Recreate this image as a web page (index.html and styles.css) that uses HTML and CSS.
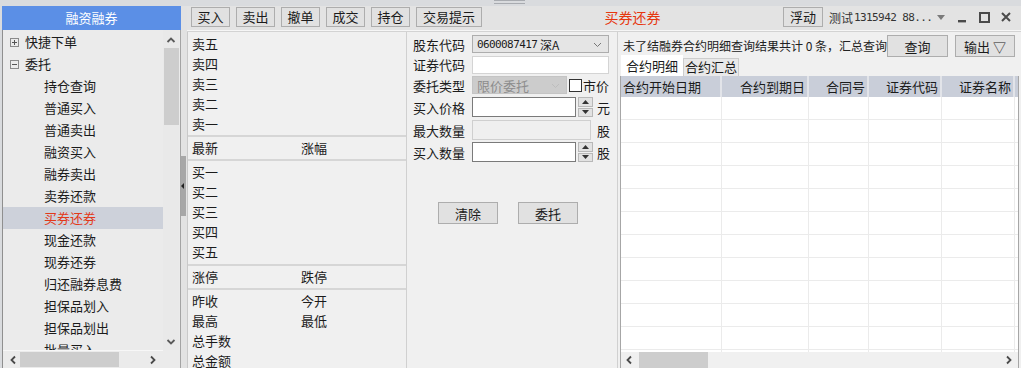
FILE: index.html
```html
<!DOCTYPE html>
<html lang="zh-CN">
<head>
<meta charset="utf-8">
<title>融资融券</title>
<link rel="stylesheet" href="styles.css">
</head>
<body>
<div class="app">
  <div class="topstrip"><span class="grip"></span></div>
  <div class="frame">
    <aside class="side">
      <div class="side-head">融资融券</div>
      <div class="tree">
        <ul class="tree-list">
          <li class="node"><svg class="box" width="9" height="9" viewBox="0 0 9 9"><rect x="0.5" y="0.5" width="8" height="8" fill="none" stroke="#8a8a8a"/><path d="M2 4.5h5M4.5 2v5" stroke="#555"/></svg>快捷下单</li>
          <li class="node"><svg class="box" width="9" height="9" viewBox="0 0 9 9"><rect x="0.5" y="0.5" width="8" height="8" fill="none" stroke="#8a8a8a"/><path d="M2 4.5h5" stroke="#555"/></svg>委托</li>
          <li class="leaf">持仓查询</li>
          <li class="leaf">普通买入</li>
          <li class="leaf">普通卖出</li>
          <li class="leaf">融资买入</li>
          <li class="leaf">融券卖出</li>
          <li class="leaf">卖券还款</li>
          <li class="leaf sel">买券还券</li>
          <li class="leaf">现金还款</li>
          <li class="leaf">现券还券</li>
          <li class="leaf">归还融券息费</li>
          <li class="leaf">担保品划入</li>
          <li class="leaf">担保品划出</li>
          <li class="leaf">批量买入</li>
        </ul>
        <div class="vscroll">
          <svg class="arr-v" width="16" height="16" viewBox="0 0 16 16"><polyline points="4.5,10 8,6.5 11.5,10" fill="none" stroke="#5a5a5a" stroke-width="1.8"/></svg>
          <div class="vthumb"></div>
          <div class="spacer"></div>
          <svg class="arr-v" width="16" height="16" viewBox="0 0 16 16"><polyline points="4.5,6 8,9.5 11.5,6" fill="none" stroke="#5a5a5a" stroke-width="1.8"/></svg>
        </div>
        <div class="hscroll-tree">
          <svg class="arr-h" width="8" height="10" viewBox="0 0 8 10"><polyline points="6,1.5 2.5,5 6,8.5" fill="none" stroke="#4a4a4a" stroke-width="1.8"/></svg>
          <div class="hthumb-tree"></div>
          <div class="spacer"></div>
          <svg class="arr-h" width="8" height="10" viewBox="0 0 8 10"><polyline points="2,1.5 5.5,5 2,8.5" fill="none" stroke="#4a4a4a" stroke-width="1.8"/></svg>
        </div>
        <div class="corner"></div>
      </div>
    </aside>

    <div class="splitter">
      <div class="grab"><svg width="3" height="6" viewBox="0 0 3 6"><polygon points="3,0 0,3 3,6" fill="#222"/></svg></div>
    </div>

    <main class="main">
      <div class="toolbar">
        <button class="tbtn">买入</button>
        <button class="tbtn">卖出</button>
        <button class="tbtn">撤单</button>
        <button class="tbtn">成交</button>
        <button class="tbtn">持仓</button>
        <button class="tbtn wide">交易提示</button>
        <div class="title">买券还券</div>
        <button class="tbtn float">浮动</button>
        <div class="user">测试<span class="mono">1315942 88...</span></div>
        <svg class="dd" width="8" height="5" viewBox="0 0 8 5"><polygon points="0,0 8,0 4,5" fill="#7a7a7a"/></svg>
        <svg class="wc min" width="8" height="12" viewBox="0 0 8 12"><rect x="0" y="9" width="8" height="2.4" fill="#4a4a4a"/></svg>
        <svg class="wc max" width="11" height="11" viewBox="0 0 11 11"><rect x="1" y="1" width="9" height="9" fill="none" stroke="#4a4a4a" stroke-width="2"/></svg>
        <svg class="wc cls" width="10" height="10" viewBox="0 0 10 10"><path d="M1 1L9 9M9 1L1 9" stroke="#4a4a4a" stroke-width="2"/></svg>
      </div>

      <div class="content">
        <section class="quote">
          <div class="qblock q1">
            <span>卖五</span><span></span>
            <span>卖四</span><span></span>
            <span>卖三</span><span></span>
            <span>卖二</span><span></span>
            <span>卖一</span><span></span>
          </div>
          <div class="qblock q2">
            <span>最新</span><span>涨幅</span>
          </div>
          <div class="qblock q3">
            <span>买一</span><span></span>
            <span>买二</span><span></span>
            <span>买三</span><span></span>
            <span>买四</span><span></span>
            <span>买五</span><span></span>
          </div>
          <div class="qblock q4">
            <span>涨停</span><span>跌停</span>
          </div>
          <div class="qblock q5">
            <span>昨收</span><span>今开</span>
            <span>最高</span><span>最低</span>
            <span>总手数</span><span></span>
            <span>总金额</span><span></span>
          </div>
        </section>

        <section class="form">
          <div class="frow r1">
            <span class="lbl">股东代码</span>
            <div class="select wide-ctl"><span class="mono">0600087417</span>&nbsp;深A<svg class="chev" width="9" height="6" viewBox="0 0 9 6"><polyline points="1,1 4.5,4.5 8,1" fill="none" stroke="#777" stroke-width="1"/></svg></div>
          </div>
          <div class="frow r2">
            <span class="lbl">证券代码</span>
            <div class="input light wide-ctl"></div>
          </div>
          <div class="frow r3">
            <span class="lbl">委托类型</span>
            <div class="select disabled"><span>限价委托</span><svg class="chev" width="9" height="6" viewBox="0 0 9 6"><polyline points="1,1 4.5,4.5 8,1" fill="none" stroke="#bdbdbd" stroke-width="1"/></svg></div>
            <span class="check"></span><span class="ctext">市价</span>
          </div>
          <div class="frow r4">
            <span class="lbl">买入价格</span>
            <div class="input mid"></div>
            <div class="spin"><span class="sbtn"><svg width="7" height="4" viewBox="0 0 7 4"><polygon points="0,4 7,4 3.5,0" fill="#333"/></svg></span><span class="sbtn"><svg width="7" height="4" viewBox="0 0 7 4"><polygon points="0,0 7,0 3.5,4" fill="#333"/></svg></span></div>
            <span class="unit">元</span>
          </div>
          <div class="frow r5">
            <span class="lbl">最大数量</span>
            <div class="input ro"></div>
            <span class="unit u2">股</span>
          </div>
          <div class="frow r6">
            <span class="lbl">买入数量</span>
            <div class="input mid"></div>
            <div class="spin"><span class="sbtn"><svg width="7" height="4" viewBox="0 0 7 4"><polygon points="0,4 7,4 3.5,0" fill="#333"/></svg></span><span class="sbtn"><svg width="7" height="4" viewBox="0 0 7 4"><polygon points="0,0 7,0 3.5,4" fill="#333"/></svg></span></div>
            <span class="unit">股</span>
          </div>
          <div class="factions">
            <button class="fbtn">清除</button>
            <button class="fbtn">委托</button>
          </div>
        </section>

        <section class="result">
          <div class="rtop">
            <div class="status">未了结融券合约明细查询结果共计 0 条，汇总查询结果共计 0 条</div>
            <button class="rbtn">查询</button>
            <button class="rbtn out">输出 ▽</button>
          </div>
          <div class="tabs">
            <span class="tab active">合约明细</span>
            <span class="tab">合约汇总</span>
          </div>
          <div class="table">
            <div class="thead">
              <span class="th c1 left">合约开始日期</span>
              <span class="th c2">合约到期日</span>
              <span class="th c3">合同号</span>
              <span class="th c4">证券代码</span>
              <span class="th c5">证券名称</span>
              <span class="th c6"></span>
            </div>
            <div class="tbody">
              <div class="tr"><span class="td c1"></span><span class="td c2"></span><span class="td c3"></span><span class="td c4"></span><span class="td c5"></span><span class="td c6"></span></div>
              <div class="tr"><span class="td c1"></span><span class="td c2"></span><span class="td c3"></span><span class="td c4"></span><span class="td c5"></span><span class="td c6"></span></div>
              <div class="tr"><span class="td c1"></span><span class="td c2"></span><span class="td c3"></span><span class="td c4"></span><span class="td c5"></span><span class="td c6"></span></div>
              <div class="tr"><span class="td c1"></span><span class="td c2"></span><span class="td c3"></span><span class="td c4"></span><span class="td c5"></span><span class="td c6"></span></div>
              <div class="tr"><span class="td c1"></span><span class="td c2"></span><span class="td c3"></span><span class="td c4"></span><span class="td c5"></span><span class="td c6"></span></div>
              <div class="tr"><span class="td c1"></span><span class="td c2"></span><span class="td c3"></span><span class="td c4"></span><span class="td c5"></span><span class="td c6"></span></div>
              <div class="tr"><span class="td c1"></span><span class="td c2"></span><span class="td c3"></span><span class="td c4"></span><span class="td c5"></span><span class="td c6"></span></div>
              <div class="tr"><span class="td c1"></span><span class="td c2"></span><span class="td c3"></span><span class="td c4"></span><span class="td c5"></span><span class="td c6"></span></div>
              <div class="tr"><span class="td c1"></span><span class="td c2"></span><span class="td c3"></span><span class="td c4"></span><span class="td c5"></span><span class="td c6"></span></div>
              <div class="tr"><span class="td c1"></span><span class="td c2"></span><span class="td c3"></span><span class="td c4"></span><span class="td c5"></span><span class="td c6"></span></div>
              <div class="tr"><span class="td c1"></span><span class="td c2"></span><span class="td c3"></span><span class="td c4"></span><span class="td c5"></span><span class="td c6"></span></div>
              <div class="tr"><span class="td c1"></span><span class="td c2"></span><span class="td c3"></span><span class="td c4"></span><span class="td c5"></span><span class="td c6"></span></div>
            </div>
            <div class="hscroll-tbl">
              <svg class="arr-h" width="8" height="10" viewBox="0 0 8 10"><polyline points="6,1.5 2.5,5 6,8.5" fill="none" stroke="#4a4a4a" stroke-width="1.8"/></svg>
              <div class="hthumb-tbl"></div>
              <div class="spacer"></div>
              <svg class="arr-h" width="8" height="10" viewBox="0 0 8 10"><polyline points="2,1.5 5.5,5 2,8.5" fill="none" stroke="#4a4a4a" stroke-width="1.8"/></svg>
            </div>
          </div>
        </section>
      </div>
    </main>
  </div>
</div>
</body>
</html>
```

FILE: styles.css
```css
* { box-sizing: border-box; margin: 0; padding: 0; }
html, body { width: 1021px; height: 368px; overflow: hidden; }
body {
  background: #d9dbde;
  font-family: "Noto Sans CJK SC", "Microsoft YaHei", sans-serif;
  font-size: 13px;
  color: #1b1b1b;
}
button { font: inherit; color: inherit; }
ul { list-style: none; }
.mono {
  font-family: "DejaVu Sans Mono", "Liberation Mono", monospace;
  font-size: 11px;
  letter-spacing: -0.6px;
}
.spacer { flex: 1; }

.app { display: flex; flex-direction: column; height: 368px; }
.topstrip { height: 6px; display: flex; background: #d9dbde; }
.grip { margin-left: 494px; width: 31px; height: 4px; border-top: 1px solid #a8abb0; border-bottom: 1px solid #a8abb0; }
.frame { flex: 1; display: flex; min-height: 0; }

/* left side */
.side { width: 179px; margin-left: 2px; display: flex; flex-direction: column; }
.side-head {
  height: 24px; line-height: 24px; text-align: center;
  background: #5b8fe6; color: #fff; font-size: 13px;
}
.tree {
  flex: 1;
  display: grid;
  grid-template-columns: 160px 16px 1fr;
  grid-template-rows: 320px 1fr;
  background: #ebebeb;
  border-left: 1px solid #8f8f8f;
  border-right: 1px solid #a3a3a3;
  min-height: 0;
}
.tree-list { overflow: hidden; padding-top: 1px; grid-column: 1; grid-row: 1; }
.tree-list li { height: 22px; line-height: 22px; white-space: nowrap; display: flex; align-items: center; }
.node { padding-left: 7px; }
.box { margin-right: 6px; flex: none; }
.leaf { padding-left: 41px; }
.sel { background: #cdd1da; color: #e2391a; }
.vscroll {
  grid-column: 2; grid-row: 1;
  background: #e9e9e9;
  display: flex; flex-direction: column; align-items: center;
}
.arr-v { flex: none; margin-top: 2px; }
.vthumb { width: 15px; height: 77px; margin-top: 0; background: #cdcdcd; }
.hscroll-tree {
  grid-column: 1; grid-row: 2;
  display: flex; align-items: center;
  padding: 0 6px 0 6px;
  border-top: 1px solid #f7f7f7;
}
.arr-h { flex: none; }
.hthumb-tree { width: 99px; height: 15px; margin-left: 3px; background: #cdcdcd; }
.corner { grid-column: 2 / 4; grid-row: 2; background: #ebebeb; }

/* splitter */
.splitter { width: 6px; background: #e2e2e2; display: flex; flex-direction: column; }
.grab {
  margin-top: 150px; height: 60px; width: 5px; background: #a7a7a7;
  display: flex; align-items: center;
}

/* main */
.main { flex: 1; display: flex; flex-direction: column; min-width: 0; }
.toolbar {
  height: 25px; flex: none;
  background: #e3e3e3;
  border-bottom: 1px solid #f6f6f6;
  display: flex; align-items: center;
  padding: 0 10px 2px 4px;
  gap: 6px;
}
.tbtn {
  height: 20px; width: 39px;
  background: #e1e1e1; border: 1px solid #adadad;
  font-size: 13px; line-height: 18px; padding: 0;
  flex: none;
}
.tbtn.wide { width: 66px; }
.title { flex: 1; text-align: center; color: #e6360e; font-size: 14px; }
.tbtn.float { width: 40px; }
.user { width: 104px; font-size: 12px; color: #333; white-space: nowrap; display: flex; align-items: center; }
.user .mono { margin-left: 1px; }
.dd { margin-left: -2px; flex: none; }
.wc { flex: none; }
.min { margin-left: 7px; }
.max { margin-left: 7px; }
.cls { margin-left: 5px; }

.content {
  flex: 1; display: flex; min-height: 0;
  background: #f0f0f0;
  border-top: 1px solid #d3d3d3;
}

/* quote */
.quote {
  width: 220px; flex: none;
  border-left: 1px solid #c9c9c9;
  border-right: 1px solid #d0d0d0;
  padding-left: 4px;
  overflow: hidden;
}
.qblock {
  display: grid;
  grid-template-columns: 109px 1fr;
  grid-auto-rows: 20px;
  line-height: 20px;
  margin-left: -4px; padding-left: 4px;
}
.q1 { padding-top: 2px; padding-bottom: 1px; border-bottom: 2px solid #d6d6d6; }
.q2, .q4 { grid-auto-rows: 22px; line-height: 22px; border-bottom: 2px solid #d6d6d6; }
.q3 { padding-top: 1px; padding-bottom: 2px; border-bottom: 2px solid #d6d6d6; }
.q5 { padding-top: 1px; }

/* form */
.form { width: 210px; flex: none; padding: 2px 0 0 6px; }
.frow { display: flex; align-items: center; }
.r1 { height: 20px; }
.r2 { height: 21px; }
.r3 { height: 20px; }
.r4 { height: 24px; }
.r5 { height: 22px; }
.r6 { height: 22px; }
.lbl { width: 59px; flex: none; }
.select {
  height: 18px; display: flex; align-items: center;
  padding-left: 4px; position: relative;
  border: 1px solid #adadad; background: #e5e5e5;
  font-size: 12px;
}
.wide-ctl { width: 137px; }
.chev { position: absolute; right: 6px; top: 6px; }
.select.disabled { width: 95px; background: #cccccc; border-color: #c4c4c4; color: #8d8d8d; font-size: 13px; }
.check { width: 13px; height: 13px; border: 1px solid #333; background: #fff; margin-left: 2px; flex: none; }
.ctext { margin-left: 1px; }
.input { height: 20px; background: #fff; border: 1px solid #7a7a7a; flex: none; }
.input.light { height: 18px; border-color: #d4d4d4; }
.input.mid { width: 104px; }
.input.ro { width: 119px; background: #efefef; border-color: #cfcfcf; }
.spin { width: 15px; height: 20px; margin-left: 2px; display: flex; flex-direction: column; gap: 1px; flex: none; }
.sbtn { flex: 1; background: #e2e2e2; border: 1px solid #b8b8b8; display: flex; align-items: center; justify-content: center; }
.unit { margin-left: 4px; }
.unit.u2 { margin-left: 6px; }
.factions { display: flex; gap: 20px; margin: 39px 0 0 25px; }
.fbtn { width: 60px; height: 22px; background: #e1e1e1; border: 1px solid #adadad; font-size: 13px; }

/* result */
.result {
  flex: 1; min-width: 0;
  border-left: 1px solid #d0d0d0;
  padding-left: 2px;
  display: flex; flex-direction: column;
}
.rtop { height: 23px; flex: none; display: flex; align-items: flex-start; padding: 3px 6px 0 3px; }
.status { flex: 1; min-width: 0; overflow: hidden; white-space: nowrap; font-size: 12px; line-height: 22px; color: #222; }
.rbtn { width: 61px; height: 22px; flex: none; background: #e1e1e1; border: 1px solid #adadad; font-size: 13px; position: relative; }
.rbtn.out { width: 60px; margin-left: 7px; }
.tabs { height: 21px; flex: none; display: flex; align-items: flex-end; padding-left: 1px; }
.tab { height: 18px; line-height: 16px; width: 56px; text-align: center; background: #e9e9e9; border: 1px solid #cdcdcd; border-bottom: none; }
.tab.active { height: 21px; width: 62px; line-height: 20px; background: #fff; border-color: #fff; }
.table {
  flex: 1; min-height: 0;
  margin-right: 2px;
  border-left: 1px solid #a6a6a6;
  border-right: 1px solid #a6a6a6;
  display: flex; flex-direction: column;
  background: #fff;
}
.thead { height: 21px; flex: none; display: flex; background: #c9ced9; }
.th { line-height: 21px; text-align: right; padding-right: 2px; border-right: 2px solid #e2e4e9; white-space: nowrap; }
.th.left { text-align: left; padding-left: 2px; }
.c1 { width: 101px; }
.c2 { width: 87px; }
.c3 { width: 60px; }
.c4 { width: 73px; }
.c5 { width: 73px; }
.c6 { flex: 1; border-right: none; }
.tbody { flex: 1; min-height: 0; overflow: hidden; background: #fff; }
.tr { height: 23px; display: flex; border-bottom: 1px solid #ebebeb; }
.td { border-right: 1px solid #ebebeb; }
.td.c1 { width: 101px; }
.td.c2 { width: 87px; }
.td.c3 { width: 60px; }
.td.c4 { width: 73px; }
.td.c5 { width: 73px; }
.td.c6 { flex: 1; border-right: none; }
.hscroll-tbl { height: 16px; flex: none; background: #f0f0f0; display: flex; align-items: center; padding: 0 5px 0 4px; }
.hthumb-tbl { width: 69px; height: 16px; margin-left: 6px; background: #cdcdcd; }
```
